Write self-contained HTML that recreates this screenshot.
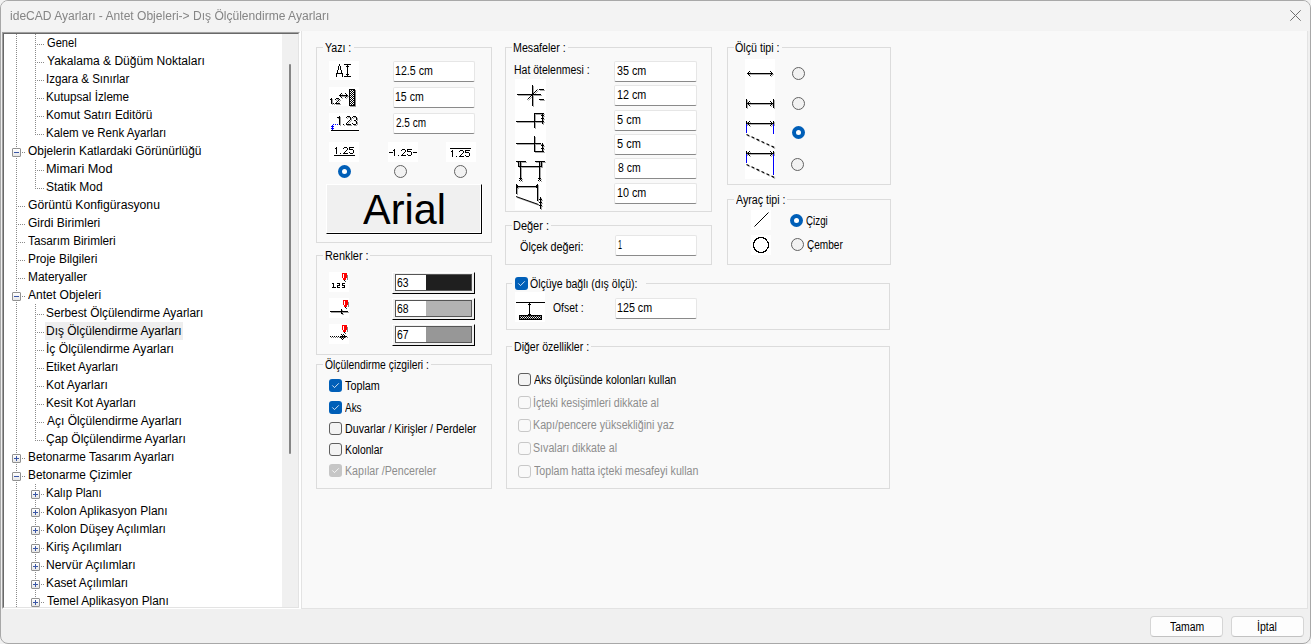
<!DOCTYPE html><html><head><meta charset="utf-8"><style>
*{margin:0;padding:0;box-sizing:border-box}
html,body{width:1311px;height:644px;overflow:hidden;background:#f2f2f2}
body{position:relative;font-family:'Liberation Sans', sans-serif}
.t{position:absolute;white-space:pre;transform-origin:0 0;font-family:'Liberation Sans', sans-serif}
.a{position:absolute}
.gb{position:absolute;border:1px solid #dcdcdc}
.lbl{position:absolute;background:#f9f9f9;height:6px}
.inp{position:absolute;background:#fff;border:1px solid #e6e6e6;border-bottom:1px solid #8a8a8a;border-radius:2px}
.ico{position:absolute;background:#fff}
.rad{position:absolute;width:13px;height:13px;border-radius:50%;border:1px solid #626262;background:#f2f2f2}
.rads{position:absolute;width:13px;height:13px;border-radius:50%;background:#005fb8}
.rads::after{content:'';position:absolute;left:4px;top:4px;width:5px;height:5px;border-radius:50%;background:#fff}
.cb{position:absolute;width:13px;height:13px;border-radius:3px;border:1px solid #5f5f5f;background:#f3f3f3}
.cbd{position:absolute;width:13px;height:13px;border-radius:3px;border:1px solid #c8c8c8;background:#f9f9f9}
.cbc{position:absolute;width:13px;height:13px;border-radius:3px;background:#005fb8}
.cbg{position:absolute;width:13px;height:13px;border-radius:3px;background:#c6c6c6}
.vd{position:absolute;width:1px;background:repeating-linear-gradient(to bottom,#8a8a8a 0 1px,transparent 1px 2px)}
.hd{position:absolute;height:1px;background:repeating-linear-gradient(to right,#8a8a8a 0 1px,transparent 1px 2px)}
.bx{position:absolute;width:9px;height:9px;border:1px solid #919191;border-radius:1px;background:linear-gradient(#fff,#e6e6e6)}
</style></head><body><div class="a" style="left:0;top:0;width:1311px;height:644px;border:1px solid #a8a8a8;border-radius:8px;background:#f0f0f0;overflow:hidden"><div class="a" style="left:0;top:0;width:1309px;height:30px;background:#f3f3f3"></div></div><svg class="a" style="left:1289px;top:9px" width="13" height="13" viewBox="0 0 13 13"><path d="M1.3 1.3L11.7 11.7M11.7 1.3L1.3 11.7" stroke="#6e6e6e" stroke-width="1"/></svg><div class="a" style="left:2px;top:32px;width:298px;height:577px;border-style:solid;border-width:1px;border-color:#a0a0a0 #fff #fff #a0a0a0"></div><div class="a" style="left:3px;top:33px;width:296px;height:575px;border-style:solid;border-width:1px;border-color:#696969 #e3e3e3 #e3e3e3 #696969;background:#fff;overflow:hidden" id="tree"><div class="a" style="left:41px;top:288px;width:138px;height:18px;background:#eeeeee"></div><div class="vd" style="left:12px;top:0px;height:113px"></div><div class="vd" style="left:12px;top:124px;height:133px"></div><div class="vd" style="left:12px;top:268px;height:151px"></div><div class="vd" style="left:12px;top:430px;height:7px"></div><div class="vd" style="left:12px;top:448px;height:127px"></div><div class="vd" style="left:31px;top:0px;height:101px"></div><div class="vd" style="left:31px;top:126px;height:29px"></div><div class="vd" style="left:31px;top:270px;height:137px"></div><div class="vd" style="left:31px;top:450px;height:5px"></div><div class="vd" style="left:31px;top:466px;height:7px"></div><div class="vd" style="left:31px;top:484px;height:7px"></div><div class="vd" style="left:31px;top:502px;height:7px"></div><div class="vd" style="left:31px;top:520px;height:7px"></div><div class="vd" style="left:31px;top:538px;height:7px"></div><div class="vd" style="left:31px;top:556px;height:7px"></div><div class="vd" style="left:31px;top:574px;height:1px"></div><div class="hd" style="left:33px;top:10px;width:7px"></div><div class="hd" style="left:33px;top:28px;width:7px"></div><div class="hd" style="left:33px;top:46px;width:7px"></div><div class="hd" style="left:33px;top:64px;width:7px"></div><div class="hd" style="left:33px;top:82px;width:7px"></div><div class="hd" style="left:33px;top:100px;width:7px"></div><div class="bx" style="left:8px;top:114px"><div class="a" style="left:1px;top:3px;width:5px;height:1px;background:#3b57a6"></div></div><div class="hd" style="left:18px;top:118px;width:3px"></div><div class="hd" style="left:33px;top:136px;width:7px"></div><div class="hd" style="left:33px;top:154px;width:7px"></div><div class="hd" style="left:14px;top:172px;width:7px"></div><div class="hd" style="left:14px;top:190px;width:7px"></div><div class="hd" style="left:14px;top:208px;width:7px"></div><div class="hd" style="left:14px;top:226px;width:7px"></div><div class="hd" style="left:14px;top:244px;width:7px"></div><div class="bx" style="left:8px;top:258px"><div class="a" style="left:1px;top:3px;width:5px;height:1px;background:#3b57a6"></div></div><div class="hd" style="left:18px;top:262px;width:3px"></div><div class="hd" style="left:33px;top:280px;width:7px"></div><div class="hd" style="left:33px;top:298px;width:7px"></div><div class="hd" style="left:33px;top:316px;width:7px"></div><div class="hd" style="left:33px;top:334px;width:7px"></div><div class="hd" style="left:33px;top:352px;width:7px"></div><div class="hd" style="left:33px;top:370px;width:7px"></div><div class="hd" style="left:33px;top:388px;width:7px"></div><div class="hd" style="left:33px;top:406px;width:7px"></div><div class="bx" style="left:8px;top:420px"><div class="a" style="left:1px;top:3px;width:5px;height:1px;background:#3b57a6"></div><div class="a" style="left:3px;top:1px;width:1px;height:5px;background:#3b57a6"></div></div><div class="hd" style="left:18px;top:424px;width:3px"></div><div class="bx" style="left:8px;top:438px"><div class="a" style="left:1px;top:3px;width:5px;height:1px;background:#3b57a6"></div></div><div class="hd" style="left:18px;top:442px;width:3px"></div><div class="bx" style="left:27px;top:456px"><div class="a" style="left:1px;top:3px;width:5px;height:1px;background:#3b57a6"></div><div class="a" style="left:3px;top:1px;width:1px;height:5px;background:#3b57a6"></div></div><div class="hd" style="left:37px;top:460px;width:3px"></div><div class="bx" style="left:27px;top:474px"><div class="a" style="left:1px;top:3px;width:5px;height:1px;background:#3b57a6"></div><div class="a" style="left:3px;top:1px;width:1px;height:5px;background:#3b57a6"></div></div><div class="hd" style="left:37px;top:478px;width:3px"></div><div class="bx" style="left:27px;top:492px"><div class="a" style="left:1px;top:3px;width:5px;height:1px;background:#3b57a6"></div><div class="a" style="left:3px;top:1px;width:1px;height:5px;background:#3b57a6"></div></div><div class="hd" style="left:37px;top:496px;width:3px"></div><div class="bx" style="left:27px;top:510px"><div class="a" style="left:1px;top:3px;width:5px;height:1px;background:#3b57a6"></div><div class="a" style="left:3px;top:1px;width:1px;height:5px;background:#3b57a6"></div></div><div class="hd" style="left:37px;top:514px;width:3px"></div><div class="bx" style="left:27px;top:528px"><div class="a" style="left:1px;top:3px;width:5px;height:1px;background:#3b57a6"></div><div class="a" style="left:3px;top:1px;width:1px;height:5px;background:#3b57a6"></div></div><div class="hd" style="left:37px;top:532px;width:3px"></div><div class="bx" style="left:27px;top:546px"><div class="a" style="left:1px;top:3px;width:5px;height:1px;background:#3b57a6"></div><div class="a" style="left:3px;top:1px;width:1px;height:5px;background:#3b57a6"></div></div><div class="hd" style="left:37px;top:550px;width:3px"></div><div class="bx" style="left:27px;top:564px"><div class="a" style="left:1px;top:3px;width:5px;height:1px;background:#3b57a6"></div><div class="a" style="left:3px;top:1px;width:1px;height:5px;background:#3b57a6"></div></div><div class="hd" style="left:37px;top:568px;width:3px"></div><div class="t" style="left:43.40px;top:2px;font-size:12px;line-height:14px;color:#000;transform:scaleX(0.9249);">Genel</div><div class="t" style="left:43.40px;top:20px;font-size:12px;line-height:14px;color:#000;transform:scaleX(1.0036);">Yakalama & Düğüm Noktaları</div><div class="t" style="left:42.44px;top:38px;font-size:12px;line-height:14px;color:#000;transform:scaleX(0.9614);">Izgara & Sınırlar</div><div class="t" style="left:42.38px;top:56px;font-size:12px;line-height:14px;color:#000;transform:scaleX(0.9733);">Kutupsal İzleme</div><div class="t" style="left:42.38px;top:74px;font-size:12px;line-height:14px;color:#000;transform:scaleX(0.9837);">Komut Satırı Editörü</div><div class="t" style="left:42.38px;top:92px;font-size:12px;line-height:14px;color:#000;transform:scaleX(0.9612);">Kalem ve Renk Ayarları</div><div class="t" style="left:24.00px;top:110px;font-size:12px;line-height:14px;color:#000;transform:scaleX(0.9926);">Objelerin Katlardaki Görünürlüğü</div><div class="t" style="left:42.38px;top:128px;font-size:12px;line-height:14px;color:#000;transform:scaleX(1.0616);">Mimari Mod</div><div class="t" style="left:42.39px;top:146px;font-size:12px;line-height:14px;color:#000;transform:scaleX(0.9999);">Statik Mod</div><div class="t" style="left:23.99px;top:164px;font-size:12px;line-height:14px;color:#000;transform:scaleX(1.0139);">Görüntü Konfigürasyonu</div><div class="t" style="left:23.98px;top:182px;font-size:12px;line-height:14px;color:#000;transform:scaleX(1.0039);">Girdi Birimleri</div><div class="t" style="left:24.00px;top:200px;font-size:12px;line-height:14px;color:#000;transform:scaleX(0.9811);">Tasarım Birimleri</div><div class="t" style="left:23.98px;top:218px;font-size:12px;line-height:14px;color:#000;transform:scaleX(0.9892);">Proje Bilgileri</div><div class="t" style="left:23.97px;top:236px;font-size:12px;line-height:14px;color:#000;transform:scaleX(0.9945);">Materyaller</div><div class="t" style="left:24.00px;top:254px;font-size:12px;line-height:14px;color:#000;transform:scaleX(1.0050);">Antet Objeleri</div><div class="t" style="left:42.38px;top:272px;font-size:12px;line-height:14px;color:#000;transform:scaleX(0.9883);">Serbest Ölçülendirme Ayarları</div><div class="t" style="left:42.37px;top:290px;font-size:12px;line-height:14px;color:#000;transform:scaleX(0.9977);">Dış Ölçülendirme Ayarları</div><div class="t" style="left:42.39px;top:308px;font-size:12px;line-height:14px;color:#000;transform:scaleX(1.0057);">İç Ölçülendirme Ayarları</div><div class="t" style="left:42.36px;top:326px;font-size:12px;line-height:14px;color:#000;transform:scaleX(0.9799);">Etiket Ayarları</div><div class="t" style="left:42.35px;top:344px;font-size:12px;line-height:14px;color:#000;transform:scaleX(0.9989);">Kot Ayarları</div><div class="t" style="left:42.36px;top:362px;font-size:12px;line-height:14px;color:#000;transform:scaleX(0.9816);">Kesit Kot Ayarları</div><div class="t" style="left:43.40px;top:380px;font-size:12px;line-height:14px;color:#000;transform:scaleX(0.9979);">Açı Ölçülendirme Ayarları</div><div class="t" style="left:42.37px;top:398px;font-size:12px;line-height:14px;color:#000;transform:scaleX(0.9991);">Çap Ölçülendirme Ayarları</div><div class="t" style="left:23.97px;top:416px;font-size:12px;line-height:14px;color:#000;transform:scaleX(0.9866);">Betonarme Tasarım Ayarları</div><div class="t" style="left:23.99px;top:434px;font-size:12px;line-height:14px;color:#000;transform:scaleX(0.9871);">Betonarme Çizimler</div><div class="t" style="left:42.36px;top:452px;font-size:12px;line-height:14px;color:#000;transform:scaleX(0.9575);">Kalıp Planı</div><div class="t" style="left:42.37px;top:470px;font-size:12px;line-height:14px;color:#000;transform:scaleX(0.9954);">Kolon Aplikasyon Planı</div><div class="t" style="left:42.37px;top:488px;font-size:12px;line-height:14px;color:#000;transform:scaleX(0.9934);">Kolon Düşey Açılımları</div><div class="t" style="left:42.36px;top:506px;font-size:12px;line-height:14px;color:#000;transform:scaleX(0.9991);">Kiriş Açılımları</div><div class="t" style="left:42.37px;top:524px;font-size:12px;line-height:14px;color:#000;transform:scaleX(1.0116);">Nervür Açılımları</div><div class="t" style="left:42.36px;top:542px;font-size:12px;line-height:14px;color:#000;transform:scaleX(0.9853);">Kaset Açılımları</div><div class="t" style="left:43.40px;top:560px;font-size:12px;line-height:14px;color:#000;transform:scaleX(0.9861);">Temel Aplikasyon Planı</div><div class="a" style="left:278px;top:0;width:16px;height:575px;background:#f0f0f0"></div><div class="a" style="left:285px;top:30px;width:2px;height:390px;border-radius:1px;background:#858585"></div></div><div class="a" style="left:300px;top:31px;width:1px;height:578px;background:#fff"></div><div class="a" style="left:301px;top:31px;width:1007px;height:578px;background:#f9f9f9;border:1px solid #e3e3e3;border-top:none"></div><div class="gb" style="left:316px;top:47px;width:176px;height:196px"></div><div class="lbl" style="left:323px;top:45px;width:31px"></div><div class="gb" style="left:316px;top:255px;width:176px;height:100px"></div><div class="lbl" style="left:323px;top:253px;width:47px"></div><div class="gb" style="left:316px;top:364px;width:176px;height:125px"></div><div class="lbl" style="left:323px;top:362px;width:108px"></div><div class="gb" style="left:505px;top:47px;width:207px;height:165px"></div><div class="lbl" style="left:512px;top:45px;width:56px"></div><div class="gb" style="left:505px;top:225px;width:207px;height:40px"></div><div class="lbl" style="left:512px;top:223px;width:39px"></div><div class="gb" style="left:506px;top:283px;width:384px;height:47px"></div><div class="lbl" style="left:512px;top:281px;width:134px"></div><div class="gb" style="left:506px;top:346px;width:384px;height:143px"></div><div class="lbl" style="left:512px;top:344px;width:79px"></div><div class="gb" style="left:727px;top:47px;width:164px;height:138px"></div><div class="lbl" style="left:734px;top:45px;width:48px"></div><div class="gb" style="left:727px;top:199px;width:164px;height:66px"></div><div class="lbl" style="left:734px;top:197px;width:53px"></div><div class="inp" style="left:393px;top:61px;width:82px;height:21px"></div><div class="inp" style="left:393px;top:87px;width:82px;height:21px"></div><div class="inp" style="left:393px;top:113px;width:82px;height:21px"></div><div class="inp" style="left:614px;top:61px;width:83px;height:21px"></div><div class="inp" style="left:614px;top:85px;width:83px;height:21px"></div><div class="inp" style="left:614px;top:110px;width:83px;height:21px"></div><div class="inp" style="left:614px;top:134px;width:83px;height:21px"></div><div class="inp" style="left:614px;top:158px;width:83px;height:21px"></div><div class="inp" style="left:614px;top:183px;width:83px;height:21px"></div><div class="inp" style="left:615px;top:235px;width:82px;height:21px"></div><div class="inp" style="left:615px;top:298px;width:82px;height:21px"></div><div class="a" style="left:1150px;top:616px;width:73px;height:21px;background:#fdfdfd;border:1px solid #d5d5d5;border-bottom-color:#c2c2c2;border-radius:4px"></div><div class="a" style="left:1231px;top:616px;width:73px;height:21px;background:#fdfdfd;border:1px solid #d5d5d5;border-bottom-color:#c2c2c2;border-radius:4px"></div><div class="a" style="left:326px;top:184px;width:157px;height:51px;border-style:solid;border-width:1px;border-color:transparent #fff #fff transparent"></div><div class="a" style="left:326px;top:184px;width:156px;height:50px;background:#f0f0f0;border-style:solid;border-width:1px;border-color:#fff #000 #000 #fff"></div><div class="a" style="left:327px;top:185px;width:154px;height:48px;border-style:solid;border-width:1px;border-color:transparent #fff #fff transparent"></div><div class="a" style="left:392px;top:272px;width:83px;height:22px;background:#f0f0f0;border-style:solid;border-width:1px;border-color:#fff #000 #000 #fff"></div><div class="a" style="left:395px;top:274px;width:77px;height:17px;background:#1f1f1f;border:1px solid #555"></div><div class="a" style="left:396px;top:275px;width:30px;height:15px;background:#fff"></div><div class="a" style="left:392px;top:298px;width:83px;height:22px;background:#f0f0f0;border-style:solid;border-width:1px;border-color:#fff #000 #000 #fff"></div><div class="a" style="left:395px;top:300px;width:77px;height:17px;background:#b3b3b3;border:1px solid #555"></div><div class="a" style="left:396px;top:301px;width:30px;height:15px;background:#fff"></div><div class="a" style="left:392px;top:324px;width:83px;height:22px;background:#f0f0f0;border-style:solid;border-width:1px;border-color:#fff #000 #000 #fff"></div><div class="a" style="left:395px;top:326px;width:77px;height:17px;background:#979797;border:1px solid #555"></div><div class="a" style="left:396px;top:327px;width:30px;height:15px;background:#fff"></div><div class="rads" style="left:338px;top:165px"></div><div class="rad" style="left:394px;top:165px"></div><div class="rad" style="left:454px;top:165px"></div><div class="rad" style="left:792px;top:67px"></div><div class="rad" style="left:792px;top:97px"></div><div class="rads" style="left:792px;top:126px"></div><div class="rad" style="left:791px;top:158px"></div><div class="rads" style="left:790px;top:214px"></div><div class="rad" style="left:791px;top:238px"></div><div class="cbc" style="left:329px;top:379px"><svg class="a" style="left:0;top:0" width="13" height="13" viewBox="0 0 13 13"><path d="M3.3 6.4L5.5 8.6L9.8 4.3" fill="none" stroke="#fff" stroke-opacity="0.9" stroke-width="0.9"/></svg></div><div class="cbc" style="left:329px;top:401px"><svg class="a" style="left:0;top:0" width="13" height="13" viewBox="0 0 13 13"><path d="M3.3 6.4L5.5 8.6L9.8 4.3" fill="none" stroke="#fff" stroke-opacity="0.9" stroke-width="0.9"/></svg></div><div class="cb" style="left:329px;top:422px"></div><div class="cb" style="left:329px;top:443px"></div><div class="cbg" style="left:329px;top:464px"><svg class="a" style="left:0;top:0" width="13" height="13" viewBox="0 0 13 13"><path d="M3.3 6.4L5.5 8.6L9.8 4.3" fill="none" stroke="#fff" stroke-opacity="0.9" stroke-width="0.9"/></svg></div><div class="cbc" style="left:515px;top:277px"><svg class="a" style="left:0;top:0" width="13" height="13" viewBox="0 0 13 13"><path d="M3.3 6.4L5.5 8.6L9.8 4.3" fill="none" stroke="#fff" stroke-opacity="0.9" stroke-width="0.9"/></svg></div><div class="cb" style="left:518px;top:373px"></div><div class="cbd" style="left:518px;top:396px"></div><div class="cbd" style="left:518px;top:419px"></div><div class="cbd" style="left:518px;top:442px"></div><div class="cbd" style="left:518px;top:465px"></div><svg class="a" style="left:0;top:0" width="1311" height="644" shape-rendering="crispEdges"><rect x="329" y="61" width="30" height="19" fill="#fff"/><rect x="329" y="87" width="30" height="19" fill="#fff"/><rect x="329" y="113" width="30" height="19" fill="#fff"/><rect x="329" y="142" width="30" height="20" fill="#fff"/><rect x="388" y="142" width="30" height="20" fill="#fff"/><rect x="446" y="142" width="30" height="20" fill="#fff"/><rect x="329" y="272" width="20" height="20" fill="#fff"/><rect x="329" y="298" width="20" height="20" fill="#fff"/><rect x="329" y="324" width="20" height="20" fill="#fff"/><rect x="515" y="79" width="31" height="131" fill="#fff"/><rect x="745" y="59" width="30" height="120" fill="#fff"/><rect x="751" y="210" width="20" height="20" fill="#fff"/><rect x="751" y="235" width="20" height="20" fill="#fff"/><rect x="515" y="292" width="30" height="30" fill="#fff"/><rect x="332" y="99" width="1" height="1" fill="#a0a0a0"/><rect x="331" y="100" width="1" height="1" fill="#a0a0a0"/><rect x="332" y="100" width="1" height="1" fill="#a0a0a0"/><rect x="332" y="101" width="1" height="1" fill="#a0a0a0"/><rect x="332" y="102" width="1" height="1" fill="#a0a0a0"/><rect x="332" y="103" width="1" height="1" fill="#a0a0a0"/><rect x="332" y="104" width="1" height="1" fill="#a0a0a0"/><rect x="334" y="104" width="1" height="1" fill="#a0a0a0"/><rect x="337" y="99" width="1" height="1" fill="#a0a0a0"/><rect x="338" y="99" width="1" height="1" fill="#a0a0a0"/><rect x="339" y="99" width="1" height="1" fill="#a0a0a0"/><rect x="336" y="100" width="1" height="1" fill="#a0a0a0"/><rect x="340" y="100" width="1" height="1" fill="#a0a0a0"/><rect x="339" y="101" width="1" height="1" fill="#a0a0a0"/><rect x="338" y="102" width="1" height="1" fill="#a0a0a0"/><rect x="337" y="103" width="1" height="1" fill="#a0a0a0"/><rect x="336" y="104" width="1" height="1" fill="#a0a0a0"/><rect x="337" y="104" width="1" height="1" fill="#a0a0a0"/><rect x="338" y="104" width="1" height="1" fill="#a0a0a0"/><rect x="339" y="104" width="1" height="1" fill="#a0a0a0"/><rect x="340" y="104" width="1" height="1" fill="#a0a0a0"/><rect x="340" y="96" width="9" height="1" fill="#a0a0a0"/><rect x="341" y="95" width="1" height="1" fill="#a0a0a0"/><rect x="341" y="97" width="1" height="1" fill="#a0a0a0"/><rect x="342" y="94" width="1" height="1" fill="#a0a0a0"/><rect x="342" y="98" width="1" height="1" fill="#a0a0a0"/><rect x="347" y="95" width="1" height="1" fill="#a0a0a0"/><rect x="347" y="97" width="1" height="1" fill="#a0a0a0"/><rect x="346" y="94" width="1" height="1" fill="#a0a0a0"/><rect x="346" y="98" width="1" height="1" fill="#a0a0a0"/><rect x="350" y="90" width="6" height="17" fill="#a0a0a0"/><rect x="340" y="117" width="1" height="1" fill="#a0a0a0"/><rect x="338" y="118" width="1" height="1" fill="#a0a0a0"/><rect x="339" y="118" width="1" height="1" fill="#a0a0a0"/><rect x="340" y="118" width="1" height="1" fill="#a0a0a0"/><rect x="340" y="119" width="1" height="1" fill="#a0a0a0"/><rect x="340" y="120" width="1" height="1" fill="#a0a0a0"/><rect x="340" y="121" width="1" height="1" fill="#a0a0a0"/><rect x="340" y="122" width="1" height="1" fill="#a0a0a0"/><rect x="340" y="123" width="1" height="1" fill="#a0a0a0"/><rect x="340" y="124" width="1" height="1" fill="#a0a0a0"/><rect x="340" y="125" width="1" height="1" fill="#a0a0a0"/><rect x="344" y="125" width="1" height="1" fill="#a0a0a0"/><rect x="348" y="117" width="1" height="1" fill="#a0a0a0"/><rect x="349" y="117" width="1" height="1" fill="#a0a0a0"/><rect x="350" y="117" width="1" height="1" fill="#a0a0a0"/><rect x="347" y="118" width="1" height="1" fill="#a0a0a0"/><rect x="351" y="118" width="1" height="1" fill="#a0a0a0"/><rect x="351" y="119" width="1" height="1" fill="#a0a0a0"/><rect x="351" y="120" width="1" height="1" fill="#a0a0a0"/><rect x="350" y="121" width="1" height="1" fill="#a0a0a0"/><rect x="349" y="122" width="1" height="1" fill="#a0a0a0"/><rect x="348" y="123" width="1" height="1" fill="#a0a0a0"/><rect x="347" y="124" width="1" height="1" fill="#a0a0a0"/><rect x="347" y="125" width="1" height="1" fill="#a0a0a0"/><rect x="348" y="125" width="1" height="1" fill="#a0a0a0"/><rect x="349" y="125" width="1" height="1" fill="#a0a0a0"/><rect x="350" y="125" width="1" height="1" fill="#a0a0a0"/><rect x="351" y="125" width="1" height="1" fill="#a0a0a0"/><rect x="354" y="117" width="1" height="1" fill="#a0a0a0"/><rect x="355" y="117" width="1" height="1" fill="#a0a0a0"/><rect x="356" y="117" width="1" height="1" fill="#a0a0a0"/><rect x="353" y="118" width="1" height="1" fill="#a0a0a0"/><rect x="357" y="118" width="1" height="1" fill="#a0a0a0"/><rect x="357" y="119" width="1" height="1" fill="#a0a0a0"/><rect x="357" y="120" width="1" height="1" fill="#a0a0a0"/><rect x="355" y="121" width="1" height="1" fill="#a0a0a0"/><rect x="356" y="121" width="1" height="1" fill="#a0a0a0"/><rect x="357" y="122" width="1" height="1" fill="#a0a0a0"/><rect x="357" y="123" width="1" height="1" fill="#a0a0a0"/><rect x="353" y="124" width="1" height="1" fill="#a0a0a0"/><rect x="357" y="124" width="1" height="1" fill="#a0a0a0"/><rect x="354" y="125" width="1" height="1" fill="#a0a0a0"/><rect x="355" y="125" width="1" height="1" fill="#a0a0a0"/><rect x="356" y="125" width="1" height="1" fill="#a0a0a0"/><rect x="331" y="312" width="18" height="1" fill="#a0a0a0"/><rect x="342" y="310" width="1" height="5" fill="#a0a0a0"/><rect x="343" y="314" width="1" height="1" fill="#a0a0a0"/><rect x="533" y="86" width="1" height="21" fill="#a8a8a8"/><rect x="518" y="95" width="24" height="1" fill="#a8a8a8"/><line x1="528.5" y1="100.5" x2="538.5" y2="90.5" stroke="#a8a8a8" stroke-width="1" shape-rendering="auto"/><rect x="540" y="90" width="5" height="1" fill="#a8a8a8"/><rect x="540" y="100" width="5" height="1" fill="#a8a8a8"/><rect x="517" y="122" width="25" height="1" fill="#a8a8a8"/><rect x="535" y="114" width="1" height="15" fill="#a8a8a8"/><rect x="535" y="114" width="10" height="1" fill="#a8a8a8"/><rect x="543" y="114" width="1" height="11" fill="#a8a8a8"/><rect x="542" y="116" width="1" height="1" fill="#a8a8a8"/><rect x="544" y="116" width="1" height="1" fill="#a8a8a8"/><rect x="542" y="119" width="1" height="1" fill="#a8a8a8"/><rect x="544" y="119" width="1" height="1" fill="#a8a8a8"/><rect x="542" y="122" width="1" height="1" fill="#a8a8a8"/><rect x="544" y="122" width="1" height="1" fill="#a8a8a8"/><rect x="517" y="144" width="25" height="1" fill="#a8a8a8"/><rect x="535" y="137" width="1" height="16" fill="#a8a8a8"/><rect x="535" y="152" width="10" height="1" fill="#a8a8a8"/><rect x="543" y="144" width="1" height="9" fill="#a8a8a8"/><rect x="542" y="146" width="1" height="1" fill="#a8a8a8"/><rect x="544" y="146" width="1" height="1" fill="#a8a8a8"/><rect x="542" y="149" width="1" height="1" fill="#a8a8a8"/><rect x="544" y="149" width="1" height="1" fill="#a8a8a8"/><rect x="517" y="162" width="10" height="1" fill="#a8a8a8"/><rect x="536" y="162" width="10" height="1" fill="#a8a8a8"/><rect x="519" y="163" width="1" height="5" fill="#a8a8a8"/><rect x="521" y="163" width="1" height="18" fill="#a8a8a8"/><rect x="540" y="163" width="1" height="18" fill="#a8a8a8"/><rect x="542" y="163" width="1" height="5" fill="#a8a8a8"/><rect x="519" y="167" width="24" height="1" fill="#a8a8a8"/><rect x="520" y="179" width="1" height="1" fill="#a8a8a8"/><rect x="522" y="179" width="1" height="1" fill="#a8a8a8"/><rect x="520" y="181" width="1" height="1" fill="#a8a8a8"/><rect x="522" y="181" width="1" height="1" fill="#a8a8a8"/><rect x="539" y="179" width="1" height="1" fill="#a8a8a8"/><rect x="541" y="179" width="1" height="1" fill="#a8a8a8"/><rect x="539" y="181" width="1" height="1" fill="#a8a8a8"/><rect x="541" y="181" width="1" height="1" fill="#a8a8a8"/><rect x="517" y="187" width="22" height="1" fill="#a8a8a8"/><rect x="517" y="185" width="1" height="10" fill="#a8a8a8"/><rect x="538" y="185" width="1" height="17" fill="#a8a8a8"/><line x1="517" y1="197.5" x2="539.5" y2="205.5" stroke="#a8a8a8" stroke-width="1" shape-rendering="auto"/><rect x="518" y="186" width="1" height="1" fill="#a8a8a8"/><rect x="518" y="188" width="1" height="1" fill="#a8a8a8"/><rect x="537" y="186" width="1" height="1" fill="#a8a8a8"/><rect x="537" y="188" width="1" height="1" fill="#a8a8a8"/><rect x="541" y="198" width="1" height="12" fill="#a8a8a8"/><rect x="540" y="200" width="1" height="1" fill="#a8a8a8"/><rect x="542" y="200" width="1" height="1" fill="#a8a8a8"/><rect x="540" y="203" width="1" height="1" fill="#a8a8a8"/><rect x="542" y="203" width="1" height="1" fill="#a8a8a8"/><rect x="540" y="206" width="1" height="1" fill="#a8a8a8"/><rect x="542" y="206" width="1" height="1" fill="#a8a8a8"/><rect x="748" y="74" width="26" height="1" fill="#b0b0b0"/><rect x="749" y="73" width="1" height="1" fill="#b0b0b0"/><rect x="749" y="75" width="1" height="1" fill="#b0b0b0"/><rect x="750" y="72" width="1" height="1" fill="#b0b0b0"/><rect x="750" y="76" width="1" height="1" fill="#b0b0b0"/><rect x="772" y="73" width="1" height="1" fill="#b0b0b0"/><rect x="772" y="75" width="1" height="1" fill="#b0b0b0"/><rect x="771" y="72" width="1" height="1" fill="#b0b0b0"/><rect x="771" y="76" width="1" height="1" fill="#b0b0b0"/><rect x="748" y="104" width="26" height="1" fill="#b0b0b0"/><rect x="749" y="103" width="1" height="1" fill="#b0b0b0"/><rect x="749" y="105" width="1" height="1" fill="#b0b0b0"/><rect x="750" y="102" width="1" height="1" fill="#b0b0b0"/><rect x="750" y="106" width="1" height="1" fill="#b0b0b0"/><rect x="772" y="103" width="1" height="1" fill="#b0b0b0"/><rect x="772" y="105" width="1" height="1" fill="#b0b0b0"/><rect x="771" y="102" width="1" height="1" fill="#b0b0b0"/><rect x="771" y="106" width="1" height="1" fill="#b0b0b0"/><rect x="747" y="100" width="1" height="9" fill="#b0b0b0"/><rect x="774" y="100" width="1" height="9" fill="#b0b0b0"/><rect x="748" y="124" width="26" height="1" fill="#b0b0b0"/><rect x="749" y="123" width="1" height="1" fill="#b0b0b0"/><rect x="749" y="125" width="1" height="1" fill="#b0b0b0"/><rect x="750" y="122" width="1" height="1" fill="#b0b0b0"/><rect x="750" y="126" width="1" height="1" fill="#b0b0b0"/><rect x="772" y="123" width="1" height="1" fill="#b0b0b0"/><rect x="772" y="125" width="1" height="1" fill="#b0b0b0"/><rect x="771" y="122" width="1" height="1" fill="#b0b0b0"/><rect x="771" y="126" width="1" height="1" fill="#b0b0b0"/><rect x="747" y="122" width="1" height="4" fill="#b0b0b0"/><rect x="774" y="122" width="1" height="4" fill="#b0b0b0"/><line x1="747.5" y1="135.5" x2="775.5" y2="148.5" stroke="#b0b0b0" stroke-width="1.2" stroke-dasharray="3 2.5" shape-rendering="auto"/><rect x="748" y="154" width="26" height="1" fill="#b0b0b0"/><rect x="749" y="153" width="1" height="1" fill="#b0b0b0"/><rect x="749" y="155" width="1" height="1" fill="#b0b0b0"/><rect x="750" y="152" width="1" height="1" fill="#b0b0b0"/><rect x="750" y="156" width="1" height="1" fill="#b0b0b0"/><rect x="772" y="153" width="1" height="1" fill="#b0b0b0"/><rect x="772" y="155" width="1" height="1" fill="#b0b0b0"/><rect x="771" y="152" width="1" height="1" fill="#b0b0b0"/><rect x="771" y="156" width="1" height="1" fill="#b0b0b0"/><rect x="747" y="152" width="1" height="4" fill="#b0b0b0"/><rect x="774" y="152" width="1" height="4" fill="#b0b0b0"/><line x1="747.5" y1="165.5" x2="775.5" y2="178.5" stroke="#b0b0b0" stroke-width="1.2" stroke-dasharray="3 2.5" shape-rendering="auto"/><rect x="339" y="64" width="1" height="2" fill="#000"/><rect x="338" y="66" width="1" height="4" fill="#000"/><rect x="340" y="66" width="1" height="4" fill="#000"/><rect x="337" y="70" width="1" height="3" fill="#000"/><rect x="341" y="70" width="1" height="3" fill="#000"/><rect x="336" y="73" width="1" height="4" fill="#000"/><rect x="342" y="73" width="1" height="4" fill="#000"/><rect x="336" y="73" width="7" height="1" fill="#000"/><rect x="344" y="64" width="7" height="1" fill="#000"/><rect x="346" y="66" width="3" height="1" fill="#000"/><rect x="347" y="64" width="1" height="13" fill="#000"/><rect x="346" y="74" width="3" height="1" fill="#000"/><rect x="344" y="76" width="7" height="1" fill="#000"/><rect x="331" y="98" width="1" height="1" fill="#000"/><rect x="330" y="99" width="1" height="1" fill="#000"/><rect x="331" y="99" width="1" height="1" fill="#000"/><rect x="331" y="100" width="1" height="1" fill="#000"/><rect x="331" y="101" width="1" height="1" fill="#000"/><rect x="331" y="102" width="1" height="1" fill="#000"/><rect x="331" y="103" width="1" height="1" fill="#000"/><rect x="333" y="103" width="1" height="1" fill="#000"/><rect x="336" y="98" width="1" height="1" fill="#000"/><rect x="337" y="98" width="1" height="1" fill="#000"/><rect x="338" y="98" width="1" height="1" fill="#000"/><rect x="335" y="99" width="1" height="1" fill="#000"/><rect x="339" y="99" width="1" height="1" fill="#000"/><rect x="338" y="100" width="1" height="1" fill="#000"/><rect x="337" y="101" width="1" height="1" fill="#000"/><rect x="336" y="102" width="1" height="1" fill="#000"/><rect x="335" y="103" width="1" height="1" fill="#000"/><rect x="336" y="103" width="1" height="1" fill="#000"/><rect x="337" y="103" width="1" height="1" fill="#000"/><rect x="338" y="103" width="1" height="1" fill="#000"/><rect x="339" y="103" width="1" height="1" fill="#000"/><rect x="339" y="95" width="9" height="1" fill="#000"/><rect x="340" y="94" width="1" height="1" fill="#000"/><rect x="340" y="96" width="1" height="1" fill="#000"/><rect x="341" y="93" width="1" height="1" fill="#000"/><rect x="341" y="97" width="1" height="1" fill="#000"/><rect x="346" y="94" width="1" height="1" fill="#000"/><rect x="346" y="96" width="1" height="1" fill="#000"/><rect x="345" y="93" width="1" height="1" fill="#000"/><rect x="345" y="97" width="1" height="1" fill="#000"/><rect x="349" y="89" width="6" height="17" fill="#000"/><rect x="350" y="90" width="1" height="1" fill="#fff"/><rect x="352" y="90" width="1" height="1" fill="#fff"/><rect x="351" y="91" width="1" height="1" fill="#fff"/><rect x="353" y="91" width="1" height="1" fill="#fff"/><rect x="350" y="92" width="1" height="1" fill="#fff"/><rect x="352" y="92" width="1" height="1" fill="#fff"/><rect x="351" y="93" width="1" height="1" fill="#fff"/><rect x="353" y="93" width="1" height="1" fill="#fff"/><rect x="350" y="94" width="1" height="1" fill="#fff"/><rect x="352" y="94" width="1" height="1" fill="#fff"/><rect x="351" y="95" width="1" height="1" fill="#fff"/><rect x="353" y="95" width="1" height="1" fill="#fff"/><rect x="350" y="96" width="1" height="1" fill="#fff"/><rect x="352" y="96" width="1" height="1" fill="#fff"/><rect x="351" y="97" width="1" height="1" fill="#fff"/><rect x="353" y="97" width="1" height="1" fill="#fff"/><rect x="350" y="98" width="1" height="1" fill="#fff"/><rect x="352" y="98" width="1" height="1" fill="#fff"/><rect x="351" y="99" width="1" height="1" fill="#fff"/><rect x="353" y="99" width="1" height="1" fill="#fff"/><rect x="350" y="100" width="1" height="1" fill="#fff"/><rect x="352" y="100" width="1" height="1" fill="#fff"/><rect x="351" y="101" width="1" height="1" fill="#fff"/><rect x="353" y="101" width="1" height="1" fill="#fff"/><rect x="350" y="102" width="1" height="1" fill="#fff"/><rect x="352" y="102" width="1" height="1" fill="#fff"/><rect x="351" y="103" width="1" height="1" fill="#fff"/><rect x="353" y="103" width="1" height="1" fill="#fff"/><rect x="350" y="104" width="1" height="1" fill="#fff"/><rect x="352" y="104" width="1" height="1" fill="#fff"/><rect x="355" y="90" width="1" height="16" fill="#888"/><rect x="339" y="116" width="1" height="1" fill="#000"/><rect x="337" y="117" width="1" height="1" fill="#000"/><rect x="338" y="117" width="1" height="1" fill="#000"/><rect x="339" y="117" width="1" height="1" fill="#000"/><rect x="339" y="118" width="1" height="1" fill="#000"/><rect x="339" y="119" width="1" height="1" fill="#000"/><rect x="339" y="120" width="1" height="1" fill="#000"/><rect x="339" y="121" width="1" height="1" fill="#000"/><rect x="339" y="122" width="1" height="1" fill="#000"/><rect x="339" y="123" width="1" height="1" fill="#000"/><rect x="339" y="124" width="1" height="1" fill="#000"/><rect x="343" y="124" width="1" height="1" fill="#000"/><rect x="347" y="116" width="1" height="1" fill="#000"/><rect x="348" y="116" width="1" height="1" fill="#000"/><rect x="349" y="116" width="1" height="1" fill="#000"/><rect x="346" y="117" width="1" height="1" fill="#000"/><rect x="350" y="117" width="1" height="1" fill="#000"/><rect x="350" y="118" width="1" height="1" fill="#000"/><rect x="350" y="119" width="1" height="1" fill="#000"/><rect x="349" y="120" width="1" height="1" fill="#000"/><rect x="348" y="121" width="1" height="1" fill="#000"/><rect x="347" y="122" width="1" height="1" fill="#000"/><rect x="346" y="123" width="1" height="1" fill="#000"/><rect x="346" y="124" width="1" height="1" fill="#000"/><rect x="347" y="124" width="1" height="1" fill="#000"/><rect x="348" y="124" width="1" height="1" fill="#000"/><rect x="349" y="124" width="1" height="1" fill="#000"/><rect x="350" y="124" width="1" height="1" fill="#000"/><rect x="353" y="116" width="1" height="1" fill="#000"/><rect x="354" y="116" width="1" height="1" fill="#000"/><rect x="355" y="116" width="1" height="1" fill="#000"/><rect x="352" y="117" width="1" height="1" fill="#000"/><rect x="356" y="117" width="1" height="1" fill="#000"/><rect x="356" y="118" width="1" height="1" fill="#000"/><rect x="356" y="119" width="1" height="1" fill="#000"/><rect x="354" y="120" width="1" height="1" fill="#000"/><rect x="355" y="120" width="1" height="1" fill="#000"/><rect x="356" y="121" width="1" height="1" fill="#000"/><rect x="356" y="122" width="1" height="1" fill="#000"/><rect x="352" y="123" width="1" height="1" fill="#000"/><rect x="356" y="123" width="1" height="1" fill="#000"/><rect x="353" y="124" width="1" height="1" fill="#000"/><rect x="354" y="124" width="1" height="1" fill="#000"/><rect x="355" y="124" width="1" height="1" fill="#000"/><rect x="331" y="130" width="28" height="1" fill="#000"/><rect x="333" y="124" width="1" height="1" fill="#00f"/><rect x="335" y="124" width="1" height="1" fill="#00f"/><rect x="337" y="124" width="1" height="1" fill="#00f"/><rect x="332" y="125" width="1" height="5" fill="#00f"/><rect x="331" y="126" width="1" height="1" fill="#00f"/><rect x="333" y="126" width="1" height="1" fill="#00f"/><rect x="331" y="128" width="1" height="1" fill="#00f"/><rect x="333" y="128" width="1" height="1" fill="#00f"/><rect x="336" y="147" width="1" height="1" fill="#000"/><rect x="335" y="148" width="1" height="1" fill="#000"/><rect x="336" y="148" width="1" height="1" fill="#000"/><rect x="336" y="149" width="1" height="1" fill="#000"/><rect x="336" y="150" width="1" height="1" fill="#000"/><rect x="336" y="151" width="1" height="1" fill="#000"/><rect x="336" y="152" width="1" height="1" fill="#000"/><rect x="336" y="153" width="1" height="1" fill="#000"/><rect x="340" y="153" width="1" height="1" fill="#000"/><rect x="344" y="147" width="1" height="1" fill="#000"/><rect x="345" y="147" width="1" height="1" fill="#000"/><rect x="346" y="147" width="1" height="1" fill="#000"/><rect x="343" y="148" width="1" height="1" fill="#000"/><rect x="347" y="148" width="1" height="1" fill="#000"/><rect x="347" y="149" width="1" height="1" fill="#000"/><rect x="346" y="150" width="1" height="1" fill="#000"/><rect x="345" y="151" width="1" height="1" fill="#000"/><rect x="344" y="152" width="1" height="1" fill="#000"/><rect x="343" y="153" width="1" height="1" fill="#000"/><rect x="344" y="153" width="1" height="1" fill="#000"/><rect x="345" y="153" width="1" height="1" fill="#000"/><rect x="346" y="153" width="1" height="1" fill="#000"/><rect x="347" y="153" width="1" height="1" fill="#000"/><rect x="349" y="147" width="1" height="1" fill="#000"/><rect x="350" y="147" width="1" height="1" fill="#000"/><rect x="351" y="147" width="1" height="1" fill="#000"/><rect x="352" y="147" width="1" height="1" fill="#000"/><rect x="353" y="147" width="1" height="1" fill="#000"/><rect x="349" y="148" width="1" height="1" fill="#000"/><rect x="349" y="149" width="1" height="1" fill="#000"/><rect x="350" y="149" width="1" height="1" fill="#000"/><rect x="351" y="149" width="1" height="1" fill="#000"/><rect x="352" y="149" width="1" height="1" fill="#000"/><rect x="353" y="150" width="1" height="1" fill="#000"/><rect x="353" y="151" width="1" height="1" fill="#000"/><rect x="349" y="152" width="1" height="1" fill="#000"/><rect x="353" y="152" width="1" height="1" fill="#000"/><rect x="350" y="153" width="1" height="1" fill="#000"/><rect x="351" y="153" width="1" height="1" fill="#000"/><rect x="352" y="153" width="1" height="1" fill="#000"/><rect x="334" y="155" width="21" height="1" fill="#000"/><rect x="389" y="152" width="1" height="1" fill="#000"/><rect x="390" y="152" width="1" height="1" fill="#000"/><rect x="391" y="152" width="1" height="1" fill="#000"/><rect x="392" y="152" width="1" height="1" fill="#000"/><rect x="394" y="149" width="1" height="1" fill="#000"/><rect x="393" y="150" width="1" height="1" fill="#000"/><rect x="394" y="150" width="1" height="1" fill="#000"/><rect x="394" y="151" width="1" height="1" fill="#000"/><rect x="394" y="152" width="1" height="1" fill="#000"/><rect x="394" y="153" width="1" height="1" fill="#000"/><rect x="394" y="154" width="1" height="1" fill="#000"/><rect x="394" y="155" width="1" height="1" fill="#000"/><rect x="398" y="155" width="1" height="1" fill="#000"/><rect x="402" y="149" width="1" height="1" fill="#000"/><rect x="403" y="149" width="1" height="1" fill="#000"/><rect x="404" y="149" width="1" height="1" fill="#000"/><rect x="401" y="150" width="1" height="1" fill="#000"/><rect x="405" y="150" width="1" height="1" fill="#000"/><rect x="405" y="151" width="1" height="1" fill="#000"/><rect x="404" y="152" width="1" height="1" fill="#000"/><rect x="403" y="153" width="1" height="1" fill="#000"/><rect x="402" y="154" width="1" height="1" fill="#000"/><rect x="401" y="155" width="1" height="1" fill="#000"/><rect x="402" y="155" width="1" height="1" fill="#000"/><rect x="403" y="155" width="1" height="1" fill="#000"/><rect x="404" y="155" width="1" height="1" fill="#000"/><rect x="405" y="155" width="1" height="1" fill="#000"/><rect x="407" y="149" width="1" height="1" fill="#000"/><rect x="408" y="149" width="1" height="1" fill="#000"/><rect x="409" y="149" width="1" height="1" fill="#000"/><rect x="410" y="149" width="1" height="1" fill="#000"/><rect x="411" y="149" width="1" height="1" fill="#000"/><rect x="407" y="150" width="1" height="1" fill="#000"/><rect x="407" y="151" width="1" height="1" fill="#000"/><rect x="408" y="151" width="1" height="1" fill="#000"/><rect x="409" y="151" width="1" height="1" fill="#000"/><rect x="410" y="151" width="1" height="1" fill="#000"/><rect x="411" y="152" width="1" height="1" fill="#000"/><rect x="411" y="153" width="1" height="1" fill="#000"/><rect x="407" y="154" width="1" height="1" fill="#000"/><rect x="411" y="154" width="1" height="1" fill="#000"/><rect x="408" y="155" width="1" height="1" fill="#000"/><rect x="409" y="155" width="1" height="1" fill="#000"/><rect x="410" y="155" width="1" height="1" fill="#000"/><rect x="413" y="152" width="1" height="1" fill="#000"/><rect x="414" y="152" width="1" height="1" fill="#000"/><rect x="415" y="152" width="1" height="1" fill="#000"/><rect x="416" y="152" width="1" height="1" fill="#000"/><rect x="450" y="148" width="21" height="1" fill="#000"/><rect x="452" y="150" width="1" height="1" fill="#000"/><rect x="451" y="151" width="1" height="1" fill="#000"/><rect x="452" y="151" width="1" height="1" fill="#000"/><rect x="452" y="152" width="1" height="1" fill="#000"/><rect x="452" y="153" width="1" height="1" fill="#000"/><rect x="452" y="154" width="1" height="1" fill="#000"/><rect x="452" y="155" width="1" height="1" fill="#000"/><rect x="452" y="156" width="1" height="1" fill="#000"/><rect x="456" y="156" width="1" height="1" fill="#000"/><rect x="460" y="150" width="1" height="1" fill="#000"/><rect x="461" y="150" width="1" height="1" fill="#000"/><rect x="462" y="150" width="1" height="1" fill="#000"/><rect x="459" y="151" width="1" height="1" fill="#000"/><rect x="463" y="151" width="1" height="1" fill="#000"/><rect x="463" y="152" width="1" height="1" fill="#000"/><rect x="462" y="153" width="1" height="1" fill="#000"/><rect x="461" y="154" width="1" height="1" fill="#000"/><rect x="460" y="155" width="1" height="1" fill="#000"/><rect x="459" y="156" width="1" height="1" fill="#000"/><rect x="460" y="156" width="1" height="1" fill="#000"/><rect x="461" y="156" width="1" height="1" fill="#000"/><rect x="462" y="156" width="1" height="1" fill="#000"/><rect x="463" y="156" width="1" height="1" fill="#000"/><rect x="465" y="150" width="1" height="1" fill="#000"/><rect x="466" y="150" width="1" height="1" fill="#000"/><rect x="467" y="150" width="1" height="1" fill="#000"/><rect x="468" y="150" width="1" height="1" fill="#000"/><rect x="469" y="150" width="1" height="1" fill="#000"/><rect x="465" y="151" width="1" height="1" fill="#000"/><rect x="465" y="152" width="1" height="1" fill="#000"/><rect x="466" y="152" width="1" height="1" fill="#000"/><rect x="467" y="152" width="1" height="1" fill="#000"/><rect x="468" y="152" width="1" height="1" fill="#000"/><rect x="469" y="153" width="1" height="1" fill="#000"/><rect x="469" y="154" width="1" height="1" fill="#000"/><rect x="465" y="155" width="1" height="1" fill="#000"/><rect x="469" y="155" width="1" height="1" fill="#000"/><rect x="466" y="156" width="1" height="1" fill="#000"/><rect x="467" y="156" width="1" height="1" fill="#000"/><rect x="468" y="156" width="1" height="1" fill="#000"/><rect x="342" y="273" width="5" height="5" fill="#f00"/><rect x="343" y="278" width="3" height="2" fill="#f00"/><rect x="343" y="274" width="1" height="4" fill="#fff"/><rect x="347" y="275" width="1" height="5" fill="#7a8a8a"/><rect x="344" y="280" width="1" height="1" fill="#000"/><rect x="345" y="281" width="1" height="1" fill="#444"/><rect x="332" y="283" width="1" height="1" fill="#000"/><rect x="333" y="283" width="1" height="1" fill="#000"/><rect x="333" y="284" width="1" height="1" fill="#000"/><rect x="333" y="285" width="1" height="1" fill="#000"/><rect x="333" y="286" width="1" height="1" fill="#000"/><rect x="332" y="287" width="1" height="1" fill="#000"/><rect x="333" y="287" width="1" height="1" fill="#000"/><rect x="334" y="287" width="1" height="1" fill="#000"/><rect x="335" y="287" width="1" height="1" fill="#000"/><rect x="337" y="283" width="1" height="1" fill="#000"/><rect x="338" y="283" width="1" height="1" fill="#000"/><rect x="339" y="283" width="1" height="1" fill="#000"/><rect x="339" y="284" width="1" height="1" fill="#000"/><rect x="337" y="285" width="1" height="1" fill="#000"/><rect x="338" y="285" width="1" height="1" fill="#000"/><rect x="339" y="285" width="1" height="1" fill="#000"/><rect x="337" y="286" width="1" height="1" fill="#000"/><rect x="337" y="287" width="1" height="1" fill="#000"/><rect x="338" y="287" width="1" height="1" fill="#000"/><rect x="339" y="287" width="1" height="1" fill="#000"/><rect x="342" y="283" width="1" height="1" fill="#000"/><rect x="343" y="283" width="1" height="1" fill="#000"/><rect x="344" y="283" width="1" height="1" fill="#000"/><rect x="342" y="284" width="1" height="1" fill="#000"/><rect x="342" y="285" width="1" height="1" fill="#000"/><rect x="343" y="285" width="1" height="1" fill="#000"/><rect x="344" y="285" width="1" height="1" fill="#000"/><rect x="344" y="286" width="1" height="1" fill="#000"/><rect x="342" y="287" width="1" height="1" fill="#000"/><rect x="343" y="287" width="1" height="1" fill="#000"/><rect x="344" y="287" width="1" height="1" fill="#000"/><rect x="343" y="300" width="5" height="5" fill="#f00"/><rect x="344" y="305" width="3" height="2" fill="#f00"/><rect x="344" y="301" width="1" height="4" fill="#fff"/><rect x="348" y="302" width="1" height="5" fill="#7a8a8a"/><rect x="345" y="307" width="1" height="1" fill="#000"/><rect x="346" y="308" width="1" height="1" fill="#444"/><rect x="330" y="311" width="18" height="1" fill="#000"/><rect x="341" y="309" width="1" height="5" fill="#000"/><rect x="342" y="313" width="1" height="1" fill="#000"/><rect x="342" y="325" width="5" height="5" fill="#f00"/><rect x="343" y="330" width="3" height="2" fill="#f00"/><rect x="343" y="326" width="1" height="4" fill="#fff"/><rect x="347" y="327" width="1" height="5" fill="#7a8a8a"/><rect x="344" y="332" width="1" height="1" fill="#000"/><rect x="345" y="333" width="1" height="1" fill="#444"/><rect x="330" y="336" width="1" height="1" fill="#000"/><rect x="332" y="336" width="1" height="1" fill="#000"/><rect x="334" y="336" width="1" height="1" fill="#000"/><rect x="336" y="336" width="1" height="1" fill="#000"/><rect x="338" y="336" width="1" height="1" fill="#000"/><rect x="340" y="336" width="1" height="1" fill="#000"/><rect x="342" y="336" width="1" height="1" fill="#000"/><rect x="344" y="336" width="1" height="1" fill="#000"/><rect x="346" y="336" width="1" height="1" fill="#000"/><rect x="331" y="337" width="1" height="1" fill="#777"/><rect x="333" y="337" width="1" height="1" fill="#777"/><rect x="335" y="337" width="1" height="1" fill="#777"/><rect x="337" y="337" width="1" height="1" fill="#777"/><rect x="339" y="337" width="1" height="1" fill="#777"/><rect x="341" y="337" width="1" height="1" fill="#777"/><rect x="343" y="337" width="1" height="1" fill="#777"/><rect x="345" y="337" width="1" height="1" fill="#777"/><rect x="347" y="337" width="1" height="1" fill="#777"/><rect x="341" y="334" width="1" height="1" fill="#000"/><rect x="343" y="334" width="1" height="1" fill="#000"/><rect x="342" y="335" width="1" height="1" fill="#000"/><rect x="341" y="336" width="1" height="1" fill="#000"/><rect x="343" y="336" width="1" height="1" fill="#000"/><rect x="340" y="337" width="1" height="1" fill="#000"/><rect x="342" y="337" width="1" height="1" fill="#000"/><rect x="344" y="337" width="1" height="1" fill="#000"/><rect x="341" y="338" width="1" height="1" fill="#000"/><rect x="343" y="338" width="1" height="1" fill="#000"/><rect x="342" y="339" width="1" height="1" fill="#000"/><rect x="345" y="336" width="1" height="1" fill="#000"/><rect x="344" y="335" width="1" height="1" fill="#000"/><rect x="532" y="85" width="1" height="21" fill="#000"/><rect x="517" y="94" width="24" height="1" fill="#000"/><line x1="527.5" y1="99.5" x2="537.5" y2="89.5" stroke="#000" stroke-width="1" shape-rendering="auto"/><rect x="539" y="89" width="5" height="1" fill="#000"/><rect x="539" y="99" width="5" height="1" fill="#000"/><rect x="516" y="121" width="25" height="1" fill="#000"/><rect x="534" y="113" width="1" height="15" fill="#000"/><rect x="534" y="113" width="10" height="1" fill="#000"/><rect x="542" y="113" width="1" height="11" fill="#000"/><rect x="541" y="115" width="1" height="1" fill="#000"/><rect x="543" y="115" width="1" height="1" fill="#000"/><rect x="541" y="118" width="1" height="1" fill="#000"/><rect x="543" y="118" width="1" height="1" fill="#000"/><rect x="541" y="121" width="1" height="1" fill="#000"/><rect x="543" y="121" width="1" height="1" fill="#000"/><rect x="516" y="143" width="25" height="1" fill="#000"/><rect x="534" y="136" width="1" height="16" fill="#000"/><rect x="534" y="151" width="10" height="1" fill="#000"/><rect x="542" y="143" width="1" height="9" fill="#000"/><rect x="541" y="145" width="1" height="1" fill="#000"/><rect x="543" y="145" width="1" height="1" fill="#000"/><rect x="541" y="148" width="1" height="1" fill="#000"/><rect x="543" y="148" width="1" height="1" fill="#000"/><rect x="516" y="161" width="10" height="1" fill="#000"/><rect x="535" y="161" width="10" height="1" fill="#000"/><rect x="518" y="162" width="1" height="5" fill="#000"/><rect x="520" y="162" width="1" height="18" fill="#000"/><rect x="539" y="162" width="1" height="18" fill="#000"/><rect x="541" y="162" width="1" height="5" fill="#000"/><rect x="518" y="166" width="24" height="1" fill="#000"/><rect x="519" y="178" width="1" height="1" fill="#000"/><rect x="521" y="178" width="1" height="1" fill="#000"/><rect x="519" y="180" width="1" height="1" fill="#000"/><rect x="521" y="180" width="1" height="1" fill="#000"/><rect x="538" y="178" width="1" height="1" fill="#000"/><rect x="540" y="178" width="1" height="1" fill="#000"/><rect x="538" y="180" width="1" height="1" fill="#000"/><rect x="540" y="180" width="1" height="1" fill="#000"/><rect x="516" y="186" width="22" height="1" fill="#000"/><rect x="516" y="184" width="1" height="10" fill="#000"/><rect x="537" y="184" width="1" height="17" fill="#000"/><line x1="516" y1="196.5" x2="538.5" y2="204.5" stroke="#000" stroke-width="1" shape-rendering="auto"/><rect x="517" y="185" width="1" height="1" fill="#000"/><rect x="517" y="187" width="1" height="1" fill="#000"/><rect x="536" y="185" width="1" height="1" fill="#000"/><rect x="536" y="187" width="1" height="1" fill="#000"/><rect x="540" y="197" width="1" height="12" fill="#000"/><rect x="539" y="199" width="1" height="1" fill="#000"/><rect x="541" y="199" width="1" height="1" fill="#000"/><rect x="539" y="202" width="1" height="1" fill="#000"/><rect x="541" y="202" width="1" height="1" fill="#000"/><rect x="539" y="205" width="1" height="1" fill="#000"/><rect x="541" y="205" width="1" height="1" fill="#000"/><rect x="747" y="73" width="26" height="1" fill="#000"/><rect x="748" y="72" width="1" height="1" fill="#000"/><rect x="748" y="74" width="1" height="1" fill="#000"/><rect x="749" y="71" width="1" height="1" fill="#000"/><rect x="749" y="75" width="1" height="1" fill="#000"/><rect x="771" y="72" width="1" height="1" fill="#000"/><rect x="771" y="74" width="1" height="1" fill="#000"/><rect x="770" y="71" width="1" height="1" fill="#000"/><rect x="770" y="75" width="1" height="1" fill="#000"/><rect x="747" y="103" width="26" height="1" fill="#000"/><rect x="748" y="102" width="1" height="1" fill="#000"/><rect x="748" y="104" width="1" height="1" fill="#000"/><rect x="749" y="101" width="1" height="1" fill="#000"/><rect x="749" y="105" width="1" height="1" fill="#000"/><rect x="771" y="102" width="1" height="1" fill="#000"/><rect x="771" y="104" width="1" height="1" fill="#000"/><rect x="770" y="101" width="1" height="1" fill="#000"/><rect x="770" y="105" width="1" height="1" fill="#000"/><rect x="746" y="99" width="1" height="9" fill="#000"/><rect x="773" y="99" width="1" height="9" fill="#000"/><rect x="747" y="123" width="26" height="1" fill="#000"/><rect x="748" y="122" width="1" height="1" fill="#000"/><rect x="748" y="124" width="1" height="1" fill="#000"/><rect x="749" y="121" width="1" height="1" fill="#000"/><rect x="749" y="125" width="1" height="1" fill="#000"/><rect x="771" y="122" width="1" height="1" fill="#000"/><rect x="771" y="124" width="1" height="1" fill="#000"/><rect x="770" y="121" width="1" height="1" fill="#000"/><rect x="770" y="125" width="1" height="1" fill="#000"/><rect x="746" y="121" width="1" height="4" fill="#000"/><rect x="773" y="121" width="1" height="4" fill="#000"/><rect x="746" y="124" width="1" height="9" fill="#0000ff"/><rect x="773" y="124" width="1" height="10" fill="#0000ff"/><line x1="746.5" y1="134.5" x2="774.5" y2="147.5" stroke="#000" stroke-width="1.2" stroke-dasharray="3 2.5" shape-rendering="auto"/><rect x="747" y="153" width="26" height="1" fill="#000"/><rect x="748" y="152" width="1" height="1" fill="#000"/><rect x="748" y="154" width="1" height="1" fill="#000"/><rect x="749" y="151" width="1" height="1" fill="#000"/><rect x="749" y="155" width="1" height="1" fill="#000"/><rect x="771" y="152" width="1" height="1" fill="#000"/><rect x="771" y="154" width="1" height="1" fill="#000"/><rect x="770" y="151" width="1" height="1" fill="#000"/><rect x="770" y="155" width="1" height="1" fill="#000"/><rect x="746" y="151" width="1" height="4" fill="#000"/><rect x="773" y="151" width="1" height="4" fill="#000"/><rect x="746" y="154" width="1" height="9" fill="#0000ff"/><rect x="773" y="154" width="1" height="21" fill="#0000ff"/><line x1="746.5" y1="164.5" x2="774.5" y2="177.5" stroke="#000" stroke-width="1.2" stroke-dasharray="3 2.5" shape-rendering="auto"/><line x1="754.5" y1="226.5" x2="768.5" y2="212.5" stroke="#000" stroke-width="1" shape-rendering="auto"/><circle cx="761" cy="245" r="7.5" fill="none" stroke="#000" stroke-width="1.1"/><rect x="516" y="302" width="29" height="1" fill="#000"/><rect x="529" y="303" width="1" height="13" fill="#000"/><rect x="528" y="304" width="3" height="1" fill="#000"/><rect x="528" y="314" width="3" height="1" fill="#000"/><rect x="519" y="315" width="23" height="5" fill="#000"/><rect x="521" y="317" width="1" height="1" fill="#fff"/><rect x="523" y="317" width="1" height="1" fill="#fff"/><rect x="525" y="317" width="1" height="1" fill="#fff"/><rect x="527" y="317" width="1" height="1" fill="#fff"/><rect x="529" y="317" width="1" height="1" fill="#fff"/><rect x="531" y="317" width="1" height="1" fill="#fff"/><rect x="533" y="317" width="1" height="1" fill="#fff"/><rect x="535" y="317" width="1" height="1" fill="#fff"/><rect x="537" y="317" width="1" height="1" fill="#fff"/><rect x="539" y="317" width="1" height="1" fill="#fff"/><rect x="520" y="316" width="1" height="1" fill="#aaa"/><rect x="520" y="318" width="1" height="1" fill="#aaa"/><rect x="522" y="316" width="1" height="1" fill="#aaa"/><rect x="522" y="318" width="1" height="1" fill="#aaa"/><rect x="524" y="316" width="1" height="1" fill="#aaa"/><rect x="524" y="318" width="1" height="1" fill="#aaa"/><rect x="526" y="316" width="1" height="1" fill="#aaa"/><rect x="526" y="318" width="1" height="1" fill="#aaa"/><rect x="528" y="316" width="1" height="1" fill="#aaa"/><rect x="528" y="318" width="1" height="1" fill="#aaa"/><rect x="530" y="316" width="1" height="1" fill="#aaa"/><rect x="530" y="318" width="1" height="1" fill="#aaa"/><rect x="532" y="316" width="1" height="1" fill="#aaa"/><rect x="532" y="318" width="1" height="1" fill="#aaa"/><rect x="534" y="316" width="1" height="1" fill="#aaa"/><rect x="534" y="318" width="1" height="1" fill="#aaa"/><rect x="536" y="316" width="1" height="1" fill="#aaa"/><rect x="536" y="318" width="1" height="1" fill="#aaa"/><rect x="538" y="316" width="1" height="1" fill="#aaa"/><rect x="538" y="318" width="1" height="1" fill="#aaa"/><rect x="540" y="316" width="1" height="1" fill="#aaa"/><rect x="540" y="318" width="1" height="1" fill="#aaa"/></svg><div class="t" style="left:9.98px;top:9px;font-size:12px;line-height:14px;color:#858585;transform:scaleX(1.0043);will-change:transform">ideCAD Ayarları - Antet Objeleri-> Dış Ölçülendirme Ayarları</div><div class="t" style="left:325.00px;top:41px;font-size:12px;line-height:14px;color:#000;transform:scaleX(0.8834);">Yazı :</div><div class="t" style="left:324.58px;top:249px;font-size:12px;line-height:14px;color:#000;transform:scaleX(0.9074);">Renkler :</div><div class="t" style="left:325.40px;top:358px;font-size:12px;line-height:14px;color:#000;transform:scaleX(0.8607);">Ölçülendirme çizgileri :</div><div class="t" style="left:345.00px;top:379px;font-size:12px;line-height:14px;color:#000;transform:scaleX(0.8997);">Toplam</div><div class="t" style="left:345.20px;top:401px;font-size:12px;line-height:14px;color:#000;transform:scaleX(0.8300);">Aks</div><div class="t" style="left:344.99px;top:422px;font-size:12px;line-height:14px;color:#000;transform:scaleX(0.8917);">Duvarlar / Kirişler / Perdeler</div><div class="t" style="left:344.97px;top:443px;font-size:12px;line-height:14px;color:#000;transform:scaleX(0.8593);">Kolonlar</div><div class="t" style="left:344.98px;top:464px;font-size:12px;line-height:14px;color:#8d8d8d;transform:scaleX(0.8880);">Kapılar /Pencereler</div><div class="t" style="left:513.35px;top:41px;font-size:12px;line-height:14px;color:#000;transform:scaleX(0.8889);">Mesafeler :</div><div class="t" style="left:513.98px;top:63px;font-size:12px;line-height:14px;color:#000;transform:scaleX(0.8732);">Hat ötelenmesi :</div><div class="t" style="left:513.17px;top:219px;font-size:12px;line-height:14px;color:#000;transform:scaleX(0.9139);">Değer :</div><div class="t" style="left:520.20px;top:240px;font-size:12px;line-height:14px;color:#000;transform:scaleX(0.8983);">Ölçek değeri:</div><div class="t" style="left:735.39px;top:41px;font-size:12px;line-height:14px;color:#000;transform:scaleX(0.8899);">Ölçü tipi :</div><div class="t" style="left:736.00px;top:193px;font-size:12px;line-height:14px;color:#000;transform:scaleX(0.8873);">Ayraç tipi :</div><div class="t" style="left:806.00px;top:214px;font-size:12px;line-height:14px;color:#000;transform:scaleX(0.8158);">Çizgi</div><div class="t" style="left:807.00px;top:238px;font-size:12px;line-height:14px;color:#000;transform:scaleX(0.8390);">Çember</div><div class="t" style="left:530.00px;top:277px;font-size:12px;line-height:14px;color:#000;transform:scaleX(0.8760);">Ölçüye bağlı (dış ölçü):</div><div class="t" style="left:552.60px;top:301px;font-size:12px;line-height:14px;color:#000;transform:scaleX(0.8684);">Ofset :</div><div class="t" style="left:514.18px;top:340px;font-size:12px;line-height:14px;color:#000;transform:scaleX(0.8801);">Diğer özellikler :</div><div class="t" style="left:534.20px;top:373px;font-size:12px;line-height:14px;color:#000;transform:scaleX(0.8809);">Aks ölçüsünde kolonları kullan</div><div class="t" style="left:533.31px;top:396px;font-size:12px;line-height:14px;color:#8d8d8d;transform:scaleX(0.8904);">İçteki kesişimleri dikkate al</div><div class="t" style="left:533.19px;top:418px;font-size:12px;line-height:14px;color:#8d8d8d;transform:scaleX(0.8920);">Kapı/pencere yüksekliğini yaz</div><div class="t" style="left:533.19px;top:441px;font-size:12px;line-height:14px;color:#8d8d8d;transform:scaleX(0.8870);">Sıvaları dikkate al</div><div class="t" style="left:534.20px;top:464px;font-size:12px;line-height:14px;color:#8d8d8d;transform:scaleX(0.8866);">Toplam hatta içteki mesafeyi kullan</div><div class="t" style="left:1169.80px;top:620px;font-size:12px;line-height:14px;color:#000;transform:scaleX(0.8697);">Tamam</div><div class="t" style="left:1256.73px;top:620px;font-size:12px;line-height:14px;color:#000;transform:scaleX(0.8765);">İptal</div><div class="t" style="left:394.95px;top:64px;font-size:12px;line-height:14px;color:#000;transform:scaleX(0.8868);">12.5 cm</div><div class="t" style="left:394.93px;top:90px;font-size:12px;line-height:14px;color:#000;transform:scaleX(0.8778);">15 cm</div><div class="t" style="left:396.00px;top:116px;font-size:12px;line-height:14px;color:#000;transform:scaleX(0.8330);">2.5 cm</div><div class="t" style="left:616.57px;top:64px;font-size:12px;line-height:14px;color:#000;transform:scaleX(0.8966);">35 cm</div><div class="t" style="left:616.57px;top:88px;font-size:12px;line-height:14px;color:#000;transform:scaleX(0.8966);">12 cm</div><div class="t" style="left:616.55px;top:113px;font-size:12px;line-height:14px;color:#000;transform:scaleX(0.9137);">5 cm</div><div class="t" style="left:616.55px;top:137px;font-size:12px;line-height:14px;color:#000;transform:scaleX(0.9137);">5 cm</div><div class="t" style="left:617.62px;top:161px;font-size:12px;line-height:14px;color:#000;transform:scaleX(0.8702);">8 cm</div><div class="t" style="left:616.57px;top:186px;font-size:12px;line-height:14px;color:#000;transform:scaleX(0.8966);">10 cm</div><div class="t" style="left:618.00px;top:238px;font-size:12px;line-height:14px;color:#000;transform:scaleX(0.5955);">1</div><div class="t" style="left:616.94px;top:301px;font-size:12px;line-height:14px;color:#000;transform:scaleX(0.8913);">125 cm</div><div class="t" style="left:397.00px;top:276px;font-size:12px;line-height:14px;color:#000;transform:scaleX(0.8652);">63</div><div class="t" style="left:397.00px;top:302px;font-size:12px;line-height:14px;color:#000;transform:scaleX(0.8652);">68</div><div class="t" style="left:397.00px;top:328px;font-size:12px;line-height:14px;color:#000;transform:scaleX(0.8652);">67</div><div class="t" style="left:363.00px;top:186px;font-size:42px;line-height:48px;color:#000;transform:scaleX(0.9867);">Arial</div></body></html>
